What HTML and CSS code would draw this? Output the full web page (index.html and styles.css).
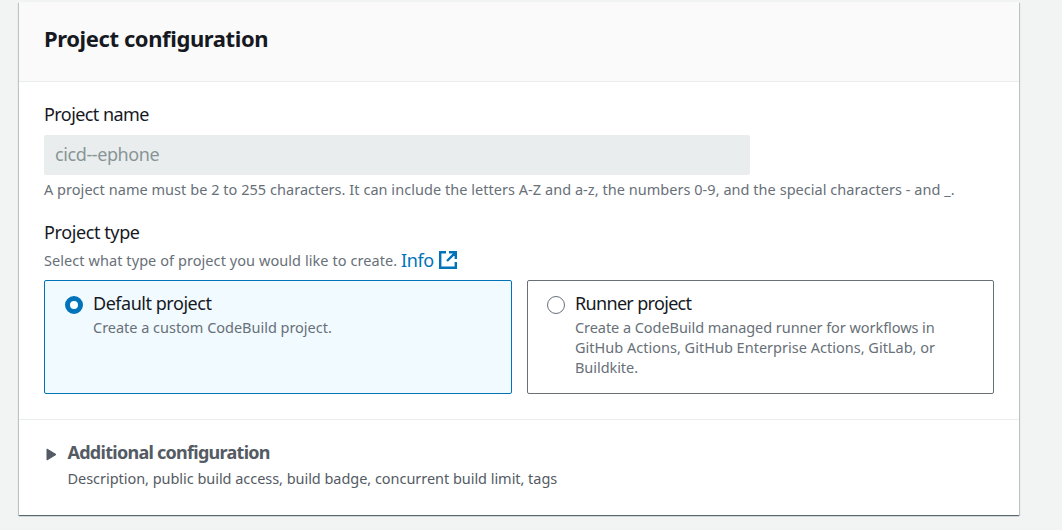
FILE: index.html
```html
<!DOCTYPE html>
<html lang="en">
<head>
<meta charset="utf-8">
<title>Project configuration</title>
<link rel="stylesheet" href="styles.css">
</head>
<body>
<main class="card">
  <header class="card-header"><h1 class="title">Project configuration</h1></header>
  <section class="content">
    <label class="label name-label" for="project-name">Project name</label>
    <input class="input" id="project-name" value="cicd--ephone" disabled>
    <p class="hint constraint">A project name must be 2 to 255 characters. It can include the letters A-Z and a-z, the numbers 0-9, and the special characters - and _.</p>
    <h2 class="label type-label">Project type</h2>
    <div class="type-description">
      <span class="hint select-hint">Select what type of project you would like to create.</span>
      <a class="info">Info</a>
      <svg class="external" viewBox="0 0 18 18" width="18" height="18" fill="none" stroke="currentColor" stroke-width="2.4"><path d="M7 1.2H1.2v15.6h15.6V11M10 1.2h6.8V8M16.5 1.5L8 10"/></svg>
    </div>
    <div class="tiles">
      <div class="tile selected">
        <span class="radio"></span>
        <div><div class="label default-label">Default project</div><p class="hint tile-hint default-hint">Create a custom CodeBuild project.</p></div>
      </div>
      <div class="tile">
        <span class="radio"></span>
        <div><div class="label runner-label">Runner project</div><p class="hint tile-hint runner-hint">Create a CodeBuild managed runner for workflows in<br><span class="actions-line">GitHub Actions, GitHub Enterprise Actions, GitLab, or</span><br>Buildkite.</p></div>
      </div>
    </div>
  </section>
  <section class="additional">
    <svg class="caret" viewBox="0 0 11 13" width="11" height="13"><path d="M1 1v11l9-5.5z" fill="#545b64" stroke="#545b64" stroke-linejoin="round"/></svg>
    <div><h2 class="additional-title">Additional configuration</h2><p class="additional-hint">Description, public build access, build badge, concurrent build limit, tags</p></div>
  </section>
</main>
</body>
</html>
```
FILE: styles.css
```css
* { box-sizing: border-box; }
body { margin: 0; height: 530px; overflow: hidden; background: #f2f3f3; color: #16191f; font-family: "Noto Sans", sans-serif; }
h1, h2, p { margin: 0; }
.card { width: 1000px; height: 513px; margin: 2px 0 0 19px; background: #fff; box-shadow: 0 1px 1px 0 rgba(0,28,36,.5), 1px 1px 1px 0 rgba(0,28,36,.15), -1px 1px 1px 0 rgba(0,28,36,.15); }
.card-header { height: 80px; padding: 21px 25px; background: #fafafa; border-bottom: 1px solid #eaeded; }
.title { font-size: 22px; line-height: 30px; font-weight: 700; letter-spacing: -.4px; white-space: nowrap; }
.content { display: flow-root; height: 337px; padding: 0 25px; }
.label { display: block; font-size: 18px; line-height: 24px; font-weight: 400; letter-spacing: -.4px; white-space: nowrap; }
.name-label { margin-top: 20px; letter-spacing: -.57px; }
.input { display: block; width: 706px; height: 40px; margin-top: 9px; padding: 0 11px 2px; border: 0; border-radius: 2px; background: #eaeded; color: #879596; font: 18px/24px "Noto Sans", sans-serif; letter-spacing: -.4px; }
.hint { color: #687078; font-size: 14.5px; line-height: 20px; letter-spacing: .04px; white-space: nowrap; }
.constraint { margin-top: 4px; }
.type-label { margin-top: 21px; }
.type-description { display: flex; align-items: center; height: 24px; margin-top: 4px; }
.select-hint { width: 357px; letter-spacing: .07px; }
.info { width: 38px; color: #0073bb; font-size: 18px; line-height: 24px; letter-spacing: -.4px; }
.external { color: #0073bb; }
.tiles { display: grid; grid-template-columns: 468px 467px; gap: 15px; margin-top: 8px; }
.tile { display: flex; gap: 10px; height: 114px; padding: 10px 19px; border: 1px solid #687078; border-radius: 2px; }
.selected { border-color: #0073bb; background: #f1faff; }
.radio { flex: none; width: 18px; height: 18px; margin-top: 5px; border: 1px solid #687078; border-radius: 50%; background: #fff; }
.selected { padding-left: 20px; }
.selected .radio { border: 5px solid #0073bb; }
.default-label { letter-spacing: -.47px; }
.runner-label { letter-spacing: -.67px; }
.tile-hint { margin-top: 2px; }
.default-hint { letter-spacing: -.02px; }
.runner-hint { letter-spacing: -.06px; }
.actions-line { letter-spacing: .01px; }
.additional { display: flex; gap: 11px; height: 96px; padding: 19px 27px; border-top: 1px solid #eaeded; }
.caret { flex: none; margin: 9px 0 0 -.5px; }
.additional-title { color: #545b64; font-size: 18px; line-height: 26px; font-weight: 700; letter-spacing: -.73px; white-space: nowrap; }
.additional-hint { color: #545b64; font-size: 14.5px; line-height: 20px; letter-spacing: -.04px; margin-top: 3px; white-space: nowrap; }
```
